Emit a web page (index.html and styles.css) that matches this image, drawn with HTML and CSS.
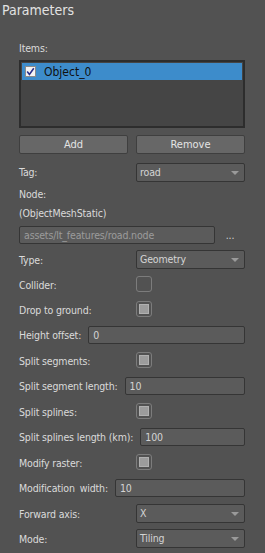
FILE: index.html
```html
<!DOCTYPE html>
<html lang="en">
<head>
  <meta charset="UTF-8" />
  <title>Parameters</title>
  <link rel="stylesheet" href="styles.css">
</head>
<body>
  <div class="title">Parameters</div>

  <div class="panel">
    <div class="items-label">Items:</div>
    <div class="list">
      <div class="list-row selected">
        <span class="tick">
          <svg width="9" height="9" viewBox="0 0 9 9"><path d="M1.2 4.6 L3.4 7.4 L7.8 1.2" fill="none" stroke="#2a2f8a" stroke-width="1.6"/></svg>
        </span>
        <span class="list-text">Object_0</span>
      </div>
    </div>

    <div class="buttons">
      <button class="btn">Add</button>
      <button class="btn">Remove</button>
    </div>

    <div class="row split r-tag">
      <span>Tag:</span>
      <div class="select">road<i class="arrow"></i></div>
    </div>
    <div class="row r-node"><span>Node:</span></div>
    <div class="row r-mesh"><span>(ObjectMeshStatic)</span></div>
    <div class="row r-path">
      <div class="input disabled">assets/lt_features/road.node</div>
      <span class="dots">...</span>
    </div>
    <div class="row split r-sel">
      <span>Type:</span>
      <div class="select">Geometry<i class="arrow"></i></div>
    </div>
    <div class="row split r-chk">
      <span>Collider:</span>
      <div class="check"></div>
    </div>
    <div class="row split r-chk">
      <span>Drop to ground:</span>
      <div class="check partial"></div>
    </div>
    <div class="row r-inp">
      <span>Height offset:</span>
      <div class="input">0</div>
    </div>
    <div class="row split r-chk">
      <span>Split segments:</span>
      <div class="check partial"></div>
    </div>
    <div class="row r-inp">
      <span>Split segment length:</span>
      <div class="input">10</div>
    </div>
    <div class="row split r-chk">
      <span>Split splines:</span>
      <div class="check partial"></div>
    </div>
    <div class="row r-inp">
      <span>Split splines length (km):</span>
      <div class="input">100</div>
    </div>
    <div class="row split r-chk">
      <span>Modify raster:</span>
      <div class="check partial"></div>
    </div>
    <div class="row r-inp">
      <span class="wide">Modification width:</span>
      <div class="input">10</div>
    </div>
    <div class="row split r-sel">
      <span>Forward axis:</span>
      <div class="select">X<i class="arrow"></i></div>
    </div>
    <div class="row split r-sel">
      <span>Mode:</span>
      <div class="select">Tiling<i class="arrow"></i></div>
    </div>
  </div>
</body>
</html>
```

FILE: styles.css
```css
body {
  margin: 0;
  background: #525252;
  color: #dadada;
  font-family: 'DejaVu Sans Condensed', 'Liberation Sans', sans-serif;
  font-size: 10.5px;
  letter-spacing: -0.15px;
}
.title {
  height: 22px;
  line-height: 20px;
  padding-left: 2px;
  font-size: 14px;
  letter-spacing: 0;
  color: #e2e2e2;
}
.panel {
  padding: 0 20px 0 19px;
  display: flex;
  flex-direction: column;
}
.items-label {
  margin-top: 18px;
  height: 16px;
  line-height: 16px;
}
.list {
  margin-top: 4px;
  height: 68px;
  box-sizing: border-box;
  border: 2px solid #2d2d2d;
  background: #454545;
  padding: 1px;
}
.list-row {
  height: 17px;
  display: flex;
  align-items: center;
}
.list-row.selected {
  background: #3d8ccb;
}
.tick {
  width: 11px;
  height: 11px;
  box-sizing: border-box;
  margin-left: 3px;
  background: #f4f4f4;
  border: 1px solid #8a8a8a;
  display: flex;
  align-items: center;
  justify-content: center;
}
.list-text {
  margin-left: 8px;
  font-size: 12px;
  letter-spacing: 0;
  color: #101010;
}
.buttons {
  margin-top: 7px;
  display: grid;
  grid-template-columns: 1fr 1fr;
  gap: 8px;
}
.btn {
  height: 19px;
  padding: 0;
  background: #676767;
  border: 1px solid #3f3f3f;
  border-radius: 2px;
  color: #e4e4e4;
  font-family: inherit;
  font-size: 11px;
}
.row {
  display: flex;
  align-items: center;
}
.row.split {
  display: grid;
  grid-template-columns: 1fr 1fr;
  gap: 8px;
}
.wide {
  word-spacing: 2px;
}
.r-tag { margin-top: 6px; height: 24px; }
.r-node { height: 19px; }
.r-mesh { height: 20px; }
.r-path { height: 24px; }
.r-sel { height: 25px; }
.r-chk { height: 25px; }
.r-inp { height: 26px; }
.select, .input {
  height: 19px;
  box-sizing: border-box;
  background: #5b5b5b;
  border: 1px solid #353535;
  border-radius: 2px;
  color: #d4d4d4;
  line-height: 17px;
  white-space: nowrap;
}
.select {
  position: relative;
  padding-left: 3px;
}
.arrow {
  position: absolute;
  right: 5px;
  top: 7px;
  border-left: 4px solid transparent;
  border-right: 4px solid transparent;
  border-top: 4px solid #9a9a9a;
}
.input {
  flex: 1;
  height: 18px;
  line-height: 16px;
  margin-left: 7px;
  padding-left: 4px;
}
.input.disabled {
  margin-left: 0;
  color: #9c9c9c;
}
.dots {
  width: 30px;
  text-align: center;
  color: #d0d0d0;
}
.check {
  width: 16px;
  height: 16px;
  box-sizing: border-box;
  border: 1px solid #7c7c7c;
  border-radius: 3px;
  margin-top: -2px;
  display: flex;
  align-items: center;
  justify-content: center;
}
.check.partial::after {
  content: "";
  width: 10px;
  height: 10px;
  box-sizing: border-box;
  background: #9c9c9c;
  border: 1px solid #b0b0b0;
}
```
